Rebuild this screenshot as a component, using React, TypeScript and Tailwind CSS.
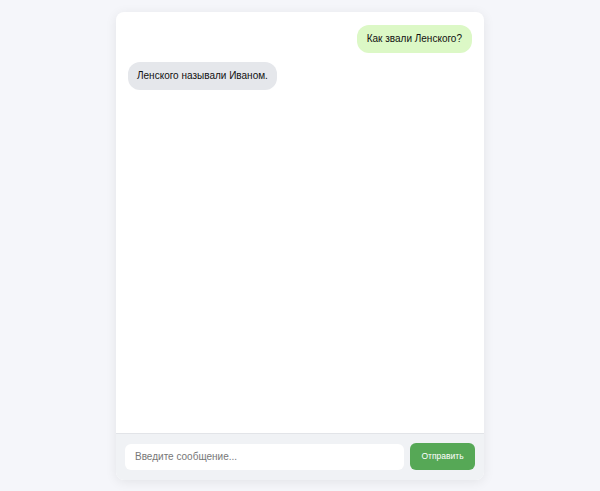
export default function App() {
  const messages = [
    { id: 1, from: "user", text: "Как звали Ленского?" },
    { id: 2, from: "bot", text: "Ленского называли Иваном." },
  ];

  return (
    <div className="min-h-[491px] bg-[#f5f6fa] pt-3 font-['Liberation_Sans',Arial,sans-serif] antialiased">
      <div className="mx-auto flex h-[468px] w-[368px] flex-col overflow-hidden rounded-lg bg-white shadow-[0_2px_12px_rgba(0,0,0,0.08)]">
        {/* Messages */}
        <div className="flex flex-1 flex-col gap-[9px] px-3 pt-[13px]">
          {messages.map((m) => (
            <div
              key={m.id}
              className={m.from === "user" ? "flex justify-end" : "flex justify-start"}
            >
              <div
                className={
                  m.from === "user"
                    ? "rounded-xl bg-[#dcf8c6] px-[10px] py-[8px] text-[10px] leading-[12px] text-[#111]"
                    : "rounded-xl bg-[#e5e7eb] px-[9px] py-[8px] text-[10px] leading-[12px] text-[#111]"
                }
              >
                {m.text}
              </div>
            </div>
          ))}
        </div>

        {/* Input bar */}
        <div className="flex items-center gap-[6px] border-t border-[#e2e4e8] bg-[#f0f2f5] px-[9px] pt-[9px] pb-[10px]">
          <input
            className="h-[26px] flex-1 rounded-md bg-white px-[10px] text-[10px] text-gray-800 outline-none placeholder:text-[#777]"
            placeholder="Введите сообщение..."
          />
          <button className="h-[27px] w-[65px] rounded-md bg-[#56a856] text-[8.5px] text-white">
            Отправить
          </button>
        </div>
      </div>
    </div>
  );
}
